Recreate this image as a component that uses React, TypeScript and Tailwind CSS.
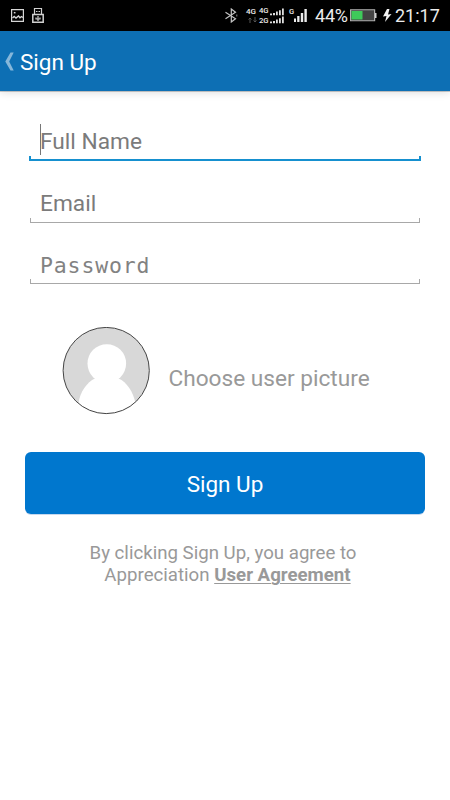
const fields = [
  { label: 'Full Name', focused: true, mono: false },
  { label: 'Email', focused: false, mono: false },
  { label: 'Password', focused: false, mono: true },
];

function StatusBar() {
  return (
    <div className="flex h-[31px] items-center bg-black pl-[11px] text-[#ececec]">
      {/* Notifications */}
      <svg className="h-[13px] w-[13px]" viewBox="0 0 13 13" fill="none" stroke="#d6d6d6" strokeWidth="1.2">
        <path d="M0.6 0.6h11.8v11.8H0.6z" />
        <path d="M1.5 9L3.2 7.500 5 9l2.500-2 1.500 1.700L10.500 7.500 12 8.500" strokeWidth="1.4" />
        <path d="M2.800 3.700h1.700" strokeWidth="1.5" />
      </svg>
      <svg className="ml-2 h-[15px] w-3" viewBox="0 0 12 15" fill="none" stroke="#d0d0d0" strokeWidth="1.2">
        <path d="M2.500 6.500v-6h7v6" />
        <path d="M4 3.500h1.500M6.500 3.500h1.500" />
        <path d="M0.800 6.500h10.400v7.700H0.800z" strokeWidth="1.500" />
        <path d="M6 8v5M4 9.500v1.500h4V9.500" />
      </svg>

      {/* Bluetooth */}
      <svg className="ml-[180px] h-[15px] w-[14px]" viewBox="0 0 14 15" fill="none" stroke="#c4c4c4" strokeWidth="1.200">
        <path d="M1.500 4.300l10 6.500L7.300 14V1l4.200 3.300-10 6.500" />
        <path d="M12.800 6.500v2" strokeWidth="0.700" />
      </svg>

      {/* Mobile data and signal */}
      <div className="ml-2 flex h-[17px] w-[13px] flex-col font-['Roboto',sans-serif] text-[8px] font-medium leading-[8px]">
        <span className="pt-px">4G</span>
        <svg className="ml-0.5 mt-px h-[6px] w-[9px]" viewBox="0 0 9 6" fill="none" stroke="#555555">
          <path d="M2 6V1M0.500 2.500L2 1l1.500 1.500M7 0v5M5.500 3.500L7 5l1.500-1.500" />
        </svg>
      </div>
      <div className="flex h-[18px] w-[11px] flex-col justify-between font-['Roboto',sans-serif] text-[7.7px] font-medium leading-[8px]">
        <span className="h-2">4G</span>
        <span className="h-2">2G</span>
      </div>
      <svg className="h-[16px] w-[14px]" viewBox="0 0 14 16" fill="#dedede">
        <path d="M0 5.500h2v1.700H0zM3 5h2v2.200H3zM6 3.500h1.800v3.700H6zM9 2.200h1.800v5H9zM12 0.500h1.800v6.700H12z" />
        <path d="M0 13.500h2v1.700H0zM3 13h2v2.200H3zM6 11.500h1.800v3.700H6zM9 10.200h1.800v5H9zM12 8.500h1.800v6.700H12z" />
      </svg>
      <div className="ml-[5px] h-[17px] w-[5px] font-['Roboto',sans-serif] text-[7.5px] font-medium leading-[9px]">G</div>
      <svg className="h-[15px] w-[13px]" viewBox="0 0 13 15" fill="#ececec">
        <path d="M0 10.500h2V14H0zM3.200 8h2.300v6H3.200zM6.800 5h2.400v9H6.800zM10.400 1h2.400v13h-2.400z" />
      </svg>

      {/* Battery and clock */}
      <span className="ml-2 w-[33px] whitespace-nowrap text-[18px] leading-[32px] tracking-[-0.2px]">44%</span>
      <svg className="ml-[2px] h-[13px] w-[27px]" viewBox="0 0 27 13">
        <path d="M0.600 0.750h24v11h-24z" fill="#444444" stroke="#b0b0b0" strokeWidth="1.200" />
        <path d="M1.500 2h11v8.500h-11z" fill="#3fca5a" />
        <path d="M25 4h1.500v5H25z" fill="#d0d0d0" />
      </svg>
      <svg className="ml-[6px] h-[13px] w-[9px]" viewBox="0 0 9 13" fill="#f2f2f2">
        <path d="M4 0L0 7.500l3.500-.5L2 13l6.500-8L5 5.500 6.500 0z" />
      </svg>
      <span className="ml-[3px] whitespace-nowrap text-[18px] leading-[32px]">21:17</span>
    </div>
  );
}

export default function App() {
  return (
    <div className="h-[800px] w-[450px] overflow-hidden bg-white font-['Roboto',sans-serif]">
      <StatusBar />

      {/* Header */}
      <header className="flex h-[60px] items-center bg-[#0d6fb4] pl-[5px] shadow-[0_1px_0_rgba(0,0,0,0.2),0_2px_8px_rgba(0,0,0,0.12)]">
        <svg className="h-[19px] w-[9px]" viewBox="0 0 9 19" fill="#86b7da">
          <path d="M5.500 0.500H8.700L4.200 9.500l4.500 9H5.500L0.300 9.500z" />
        </svg>
        <h1 className="ml-[6px] pt-[2px] text-[22.5px] leading-[30px] text-white">Sign Up</h1>
      </header>

      {/* Form */}
      <main className="px-[25px] pt-[30px]">
        <div className="flex flex-col gap-[22px] px-[5px]">
          {fields.map((field) => (
            <div key={field.label} className={field.mono ? 'flex h-[39px] flex-col' : 'flex h-10 flex-col'}>
              <div className={field.mono ? 'flex h-[34px] items-center pl-[10px]' : 'flex h-[35px] items-center pl-[10px]'}>
                {field.focused && <span className="mt-[2px] h-[31px] w-px bg-[#777777]" />}
                <span
                  className={
                    field.mono
                      ? "pt-[7px] font-['DejaVu_Sans_Mono',monospace] text-[21.5px] leading-[28px] tracking-[0.85px] text-[#828282]"
                      : field.focused
                        ? '-ml-px pt-[6px] text-[22.7px] leading-[29px] text-[#7b7b7b]'
                        : 'pt-[6px] text-[22.7px] leading-[29px] text-[#7b7b7b]'
                  }
                >
                  {field.label}
                </span>
              </div>
              <div
                className={
                  field.focused
                    ? '-mx-px h-[5px] shrink-0 border-x-2 border-b-2 border-[#1690cf]'
                    : 'h-[5px] shrink-0 border-x border-b border-[#a8a8a8]'
                }
              />
            </div>
          ))}
        </div>

        {/* User picture */}
        <div className="mt-[43px] flex h-[88px] items-center pl-[37px]">
          <svg className="h-[88px] w-[88px]" viewBox="0 0 88 88">
            <clipPath id="avatar">
              <circle cx="44.200" cy="43.500" r="43" />
            </clipPath>
            <circle cx="44.200" cy="43.500" r="43" fill="#d8d8d8" />
            <g clipPath="url(#avatar)" fill="#ffffff">
              <circle cx="44.800" cy="36.500" r="19.300" />
              <path d="M33 51.500C25 55 18 65 16.500 76v12h57V76C71 65 65 55 56.500 51.500z" />
            </g>
            <circle cx="44.200" cy="43.500" r="43.100" fill="none" stroke="#444444" strokeWidth="1" />
          </svg>
          <span className="ml-[18.5px] pt-[15px] text-[22.65px] leading-[31px] text-[#999999]">Choose user picture</span>
        </div>

        <button className="mt-[37px] block h-[62px] w-full rounded-[6px] bg-[#0077ce] pt-[3px] text-[22.5px] text-white shadow-[0_1px_0_#c6d8ee]">
          Sign Up
        </button>

        <p className="mt-[28px] pr-1 text-center text-[18.67px] leading-[22px] text-[#999999]">
          By clicking Sign Up, you agree to
          <br />
          <span className="ml-[9px]">
            Appreciation <a className="font-bold underline decoration-1 underline-offset-2">User Agreement</a>
          </span>
        </p>
      </main>
    </div>
  );
}
